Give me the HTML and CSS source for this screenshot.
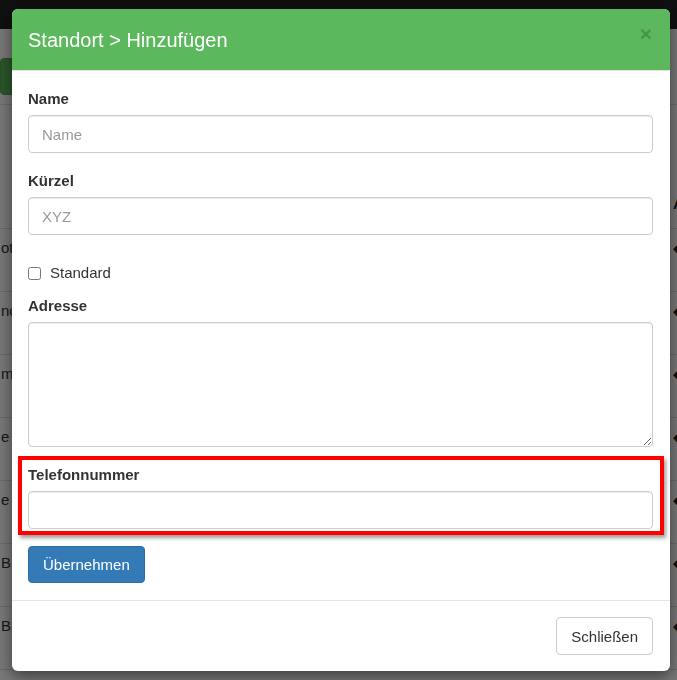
FILE: index.html
```html
<!DOCTYPE html>
<html lang="de">
<head>
<meta charset="utf-8">
<title>Standort hinzufügen</title>
<link rel="stylesheet" href="styles.css">
</head>
<body>
  <div class="page">
    <div class="navbar"></div>
    <div class="toolbar"><span class="page-btn"></span></div>
    <div class="table">
      <div class="thead"><span class="cell-l"></span><span class="cell-r">Aktion</span></div>
      <div class="trow"><span class="cell-l">otto</span><span class="cell-r">◆</span></div>
      <div class="trow"><span class="cell-l">nchen</span><span class="cell-r">◆</span></div>
      <div class="trow"><span class="cell-l">mond</span><span class="cell-r">◆</span></div>
      <div class="trow"><span class="cell-l">e</span><span class="cell-r">◆</span></div>
      <div class="trow"><span class="cell-l">e</span><span class="cell-r">◆</span></div>
      <div class="trow"><span class="cell-l">B 1</span><span class="cell-r">◆</span></div>
      <div class="trow"><span class="cell-l">B 2</span><span class="cell-r">◆</span></div>
    </div>
  </div>

  <div class="backdrop"></div>

  <div class="modal">
    <div class="modal-header">
      <h4 class="modal-title">Standort &gt; Hinzufügen</h4>
      <span class="close">×</span>
    </div>
    <form class="modal-body">
      <label class="label">Name</label>
      <input class="input" type="text" placeholder="Name">

      <label class="label group">Kürzel</label>
      <input class="input" type="text" placeholder="XYZ">

      <label class="check"><input type="checkbox" class="checkbox"> Standard</label>

      <label class="label adresse">Adresse</label>
      <textarea class="input textarea"></textarea>

      <div class="highlight">
        <label class="label">Telefonnummer</label>
        <input class="input" type="text">
      </div>

      <button type="button" class="btn btn-primary">Übernehmen</button>
    </form>
    <div class="modal-footer">
      <button type="button" class="btn btn-default">Schließen</button>
    </div>
  </div>
</body>
</html>
```

FILE: styles.css
```css
html, body {
  margin: 0;
  padding: 0;
}

body {
  width: 677px;
  height: 680px;
  overflow: hidden;
  position: relative;
  background: #fff;
  color: #333;
  font-family: "Liberation Sans", Arial, sans-serif;
  font-size: 15px;
}

/* underlying page */
.page {
  width: 677px;
}

.navbar {
  height: 29px;
  background: #222;
}

.toolbar {
  padding: 29px 0 9px;
  border-bottom: 1px solid #ddd;
}

.page-btn {
  display: block;
  width: 110px;
  height: 37px;
  box-sizing: border-box;
  background: #5cb85c;
  border: 1px solid #4cae4c;
  border-radius: 4px;
}

.table {
  margin-top: 75px;
}

.thead,
.trow {
  display: flex;
  justify-content: space-between;
  box-sizing: border-box;
  border-bottom: 1px solid #ddd;
  line-height: 20px;
}

.thead {
  height: 49px;
  padding-top: 14px;
  font-weight: bold;
}

.trow {
  height: 63px;
  padding-top: 9px;
}

.cell-l {
  white-space: nowrap;
  padding-left: 1px;
}

.cell-r {
  width: 4px;
  overflow: hidden;
  white-space: nowrap;
  color: #222;
}

.trow .cell-r {
  font-size: 11px;
}

/* dim overlay */
.backdrop {
  position: fixed;
  inset: 0;
  background: rgba(0, 0, 0, 0.53);
}

/* modal */
.modal {
  position: absolute;
  top: 9px;
  left: 12px;
  width: 658px;
  background: #fff;
  border-radius: 6px;
  overflow: hidden;
  box-shadow: 0 5px 15px rgba(0, 0, 0, 0.5);
}

.modal-header {
  display: flex;
  justify-content: space-between;
  align-items: center;
  height: 61px;
  padding: 0 18px 0 16px;
  background: #5cb85c;
  border-bottom: 1px solid #e5e5e5;
}

.modal-title {
  margin: 0;
  color: #fff;
  font-size: 20px;
  font-weight: normal;
  line-height: 22px;
}

.close {
  align-self: flex-start;
  margin-top: 14px;
  font-size: 21px;
  font-weight: bold;
  line-height: 1;
  color: rgba(0, 0, 0, 0.2);
}

.modal-body {
  display: flex;
  flex-direction: column;
  margin: 0;
  padding: 17px 17px 17px 16px;
}

.label {
  display: block;
  font-weight: bold;
  font-size: 15px;
  line-height: 22px;
  margin-bottom: 5px;
  color: #333;
}

.label.group {
  margin-top: 17px;
}

.label.adresse {
  margin-top: 11px;
}

.input {
  display: block;
  width: 100%;
  box-sizing: border-box;
  height: 38px;
  margin: 0;
  padding: 7px 13px;
  font-family: "Liberation Sans", Arial, sans-serif;
  font-size: 15px;
  color: #555;
  background: #fff;
  border: 1px solid #ccc;
  border-radius: 4px;
  box-shadow: inset 0 1px 1px rgba(0, 0, 0, 0.075);
}

.input::placeholder {
  color: #999;
}

.textarea {
  height: 125px;
  resize: vertical;
}

.check {
  display: flex;
  align-items: center;
  gap: 9px;
  margin-top: 27px;
  line-height: 22px;
  font-size: 15px;
}

.checkbox {
  width: 13px;
  height: 13px;
  margin: 0;
}

.highlight {
  margin: 9px -11px 0 -10px;
  padding: 4px 7px 2px 6px;
  border: 4px solid #ff0000;
  box-shadow: 2px 3px 4px rgba(0, 0, 0, 0.4);
}

.btn {
  box-sizing: border-box;
  padding: 0 14px;
  font-family: "Liberation Sans", Arial, sans-serif;
  font-size: 15px;
  border-radius: 4px;
  cursor: pointer;
}

.btn-primary {
  align-self: flex-start;
  margin-top: 11px;
  height: 37px;
  color: #fff;
  background: #337ab7;
  border: 1px solid #2e6da4;
}

.btn-default {
  height: 38px;
  color: #333;
  background: #fff;
  border: 1px solid #ccc;
}

.modal-footer {
  display: flex;
  justify-content: flex-end;
  padding: 16px 17px 16px;
  border-top: 1px solid #e5e5e5;
}
```
